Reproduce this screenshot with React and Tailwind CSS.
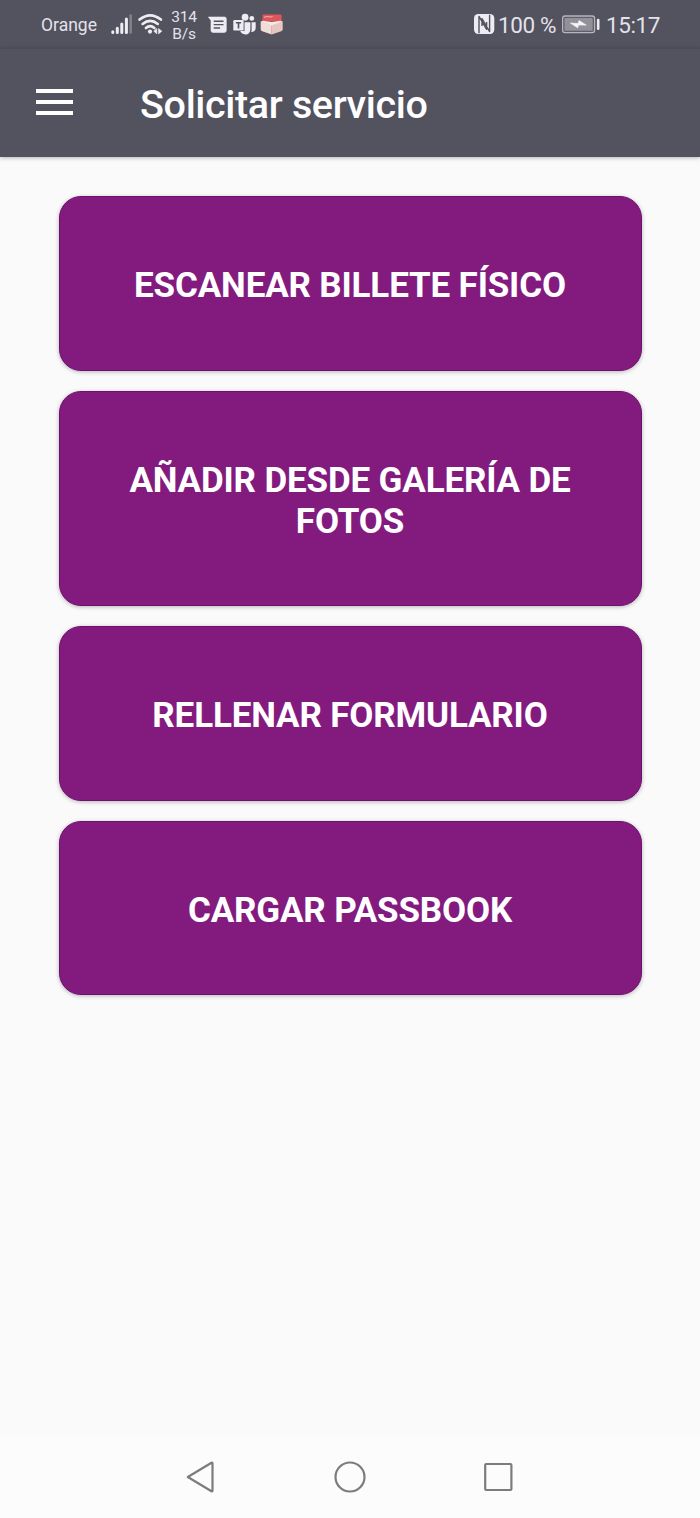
import React from "react";

const actions = [
  { label: "ESCANEAR BILLETE FÍSICO", size: "h-[175px]" },
  { label: "AÑADIR DESDE GALERÍA DE FOTOS", size: "h-[215px]" },
  { label: "RELLENAR FORMULARIO", size: "h-[175px]" },
  { label: "CARGAR PASSBOOK", size: "h-[174px]" },
];

function SignalIcon() {
  return (
    <svg className="mr-[5px] h-12 w-[22px] shrink-0" viewBox="111 0 22 48">
      <g stroke="#eeecf3" strokeWidth="3" strokeLinecap="round">
        <path d="M112.8 31.8v.8M117.3 28.3v4.3M121.8 24v8.6M126.4 19v13.6" />
        <path d="M130.7 15.5v17.1" stroke="#85838e" strokeWidth="2.4" />
      </g>
    </svg>
  );
}

function WifiIcon() {
  return (
    <svg className="mr-[7px] h-12 w-[26px] shrink-0" viewBox="138 0 26 48">
      <g fill="none" stroke="#eeecf3" strokeWidth="2.6" strokeLinecap="round">
        <path d="M139.6 19.6Q150.2 11 160.9 19.6" />
        <path d="M142.6 23.9Q150.2 17.8 157.8 23.9" />
        <path d="M145.9 28Q150.2 24.2 154.4 28" />
      </g>
      <circle cx="150" cy="31.6" r="2.1" fill="#eeecf3" />
      <path d="M156.8 28.6v5.2l-3-2.6zM158.6 28.6v5.2l3.2-2.6z" fill="#eeecf3" stroke="#eeecf3" strokeWidth=".7" strokeLinejoin="round" />
    </svg>
  );
}

function MessageIcon() {
  return (
    <svg className="mr-[5px] h-12 w-5 shrink-0" viewBox="208.5 0 20 48">
      <path d="M208.9 17h16q1.9 0 1.9 1.8v11.8q0 1.8-1.9 1.8h-11.6q-1.8 0-1.8-1.8V20.4z" fill="#eeecf3" stroke="#eeecf3" strokeWidth=".6" strokeLinejoin="round" />
      <path d="M214.2 21.2h9.8M214.2 24.6h9.8M214.2 28h6.4" stroke="#53525f" strokeWidth="1.4" />
    </svg>
  );
}

function TeamsIcon() {
  return (
    <svg className="mr-[3px] h-12 w-6 shrink-0" viewBox="233 0 24 48">
      <g fill="#eeecf3">
        <circle cx="245.1" cy="17.2" r="3.4" />
        <circle cx="251.8" cy="18.4" r="2.4" />
        <path d="M244.5 22.2h5.9v6.2c0 4-2 6-5 6s-4.6-1.6-5.2-3.4h4.3z" />
        <path d="M251.6 22.2h4.1v5.3c0 3-1.5 4.4-4.5 4.4.5-1.2.4-2.2.4-3.2z" />
        <rect x="233.3" y="20" width="10.3" height="10.6" rx="1.2" />
      </g>
      <path d="M235.9 22.8h5.2M238.5 22.8v5.6" stroke="#53525f" strokeWidth="1.6" fill="none" />
    </svg>
  );
}

function PackageIcon() {
  return (
    <svg className="h-12 w-6 shrink-0" viewBox="260 0 24 48">
      <path d="m260.7 21.5 11 3.4v9.7l-9.5-3.4q-1.5-.5-1.5-2z" fill="#f1dcd7" />
      <path d="m282.7 21.5-11 3.4v9.7l9.5-3.4q1.5-.5 1.5-2z" fill="#e5c6c1" />
      <path d="M263.3 14.5h17q1.3 0 1.3 1.4v5.6h-19.2v-5.6q0-1.4.9-1.4z" fill="#e05558" />
      <path d="m260.7 21.8 2.2-1.1 8.8 1.4 8.8-1.4 2.2 1.1-11 3.6z" fill="#f9e7e3" />
      <path d="M264 17.3q3.2-1.2 5.2-.5t3.5-.5" stroke="#f3b0b1" strokeWidth="1" fill="none" />
    </svg>
  );
}

function NfcIcon() {
  return (
    <svg className="mr-[3px] h-12 w-[22px] shrink-0" viewBox="473 0 22 48">
      <rect x="474" y="14" width="20.3" height="20" rx="4.2" fill="#eeecf3" />
      <path d="M479 33.2V16.4l7.6 12.9V22M489.6 14.8v16.8L482 18.7v7.3" fill="none" stroke="#53525f" strokeWidth="1.4" strokeLinejoin="round" />
    </svg>
  );
}

function BatteryIcon() {
  return (
    <svg className="mr-[6px] h-12 w-[38px] shrink-0" viewBox="562 0 38 48">
      <rect x="562.6" y="16" width="32" height="16.6" rx="2.3" fill="#5f5d69" stroke="#b7b5be" strokeWidth="1.3" />
      <rect x="564.5" y="17.9" width="28.2" height="12.8" rx=".8" fill="#929099" />
      <path d="m570.5 23.1 7.6.4.9-2.9 7.2 4.5-7.6-.2-1 2.9z" fill="#f5f3f8" stroke="#f5f3f8" strokeWidth=".7" />
      <path d="M598.2 20v8.8" stroke="#eeecf3" strokeWidth="2.6" strokeLinecap="round" />
    </svg>
  );
}

function StatusBar() {
  return (
    <div className="flex h-12 items-center bg-[#53525f] pl-[41px] text-[#e4e2ea]">
      <span className="w-[70px] shrink-0 pt-[3px] text-[17.5px] leading-none">Orange</span>
      <SignalIcon />
      <WifiIcon />
      <span className="w-[37px] shrink-0 pt-[3px] pr-[11px] text-center text-[15.5px] leading-[17px] tracking-[-0.2px] whitespace-nowrap">
        314
        <br />
        B/s
      </span>
      <MessageIcon />
      <TeamsIcon />
      <PackageIcon />
      <div className="flex w-[189px] shrink-0" />
      <NfcIcon />
      <span className="w-[64px] shrink-0 pt-[2px] text-[22.5px] leading-none tracking-[-0.4px] whitespace-nowrap">100 %</span>
      <BatteryIcon />
      <span className="pt-[2px] text-[22.5px] leading-none tracking-[-0.4px]">15:17</span>
    </div>
  );
}

export default function App() {
  return (
    <div className="flex h-[1518px] w-[700px] flex-col overflow-hidden bg-[#fafafa] font-['Roboto',sans-serif]">
      <StatusBar />
      <header className="flex h-[109px] shrink-0 items-center border-t border-[#4c4b58] bg-[#53525f] pl-9 text-white shadow-[0_1px_4px_rgba(0,0,0,0.28)]">
        <button aria-label="Menú" className="flex w-[37px] flex-col gap-[7px] pb-[2px]">
          <span className="h-[4px] w-full bg-white" />
          <span className="h-[4px] w-full bg-white" />
          <span className="h-[4px] w-full bg-white" />
        </button>
        <h1 className="ml-[67px] pt-[4px] text-[39.5px] leading-none font-medium tracking-[-0.35px]">Solicitar servicio</h1>
      </header>
      <main className="flex flex-1 flex-col gap-5 pt-[39px] pr-[58.5px] pl-[58.5px]">
        {actions.map((action) => (
          <button
            key={action.label}
            className={`${action.size} flex shrink-0 items-center justify-center rounded-[22px] border border-[#6f1070] bg-[#831b7f] px-[60px] pt-[4px] text-center text-[35px] leading-[41px] font-bold tracking-[-0.16px] text-white shadow-[0_1px_4px_rgba(0,0,0,0.28)]`}
          >
            {action.label}
          </button>
        ))}
      </main>
      <nav className="flex h-[82px] shrink-0 items-center justify-center bg-[#fcfcfc]">
        <svg className="h-[82px] w-[360px]" viewBox="170 1436 360 82" fill="none" stroke="#7c7c7c" strokeWidth="2.2" strokeLinejoin="round">
          <path d="m187.8 1477 23.7-14.2q1-.5 1 .6v27.2q0 1.1-1 .6z" />
          <circle cx="350" cy="1477" r="14.5" />
          <rect x="485.2" y="1464" width="26.2" height="26" rx="1" />
        </svg>
      </nav>
    </div>
  );
}
